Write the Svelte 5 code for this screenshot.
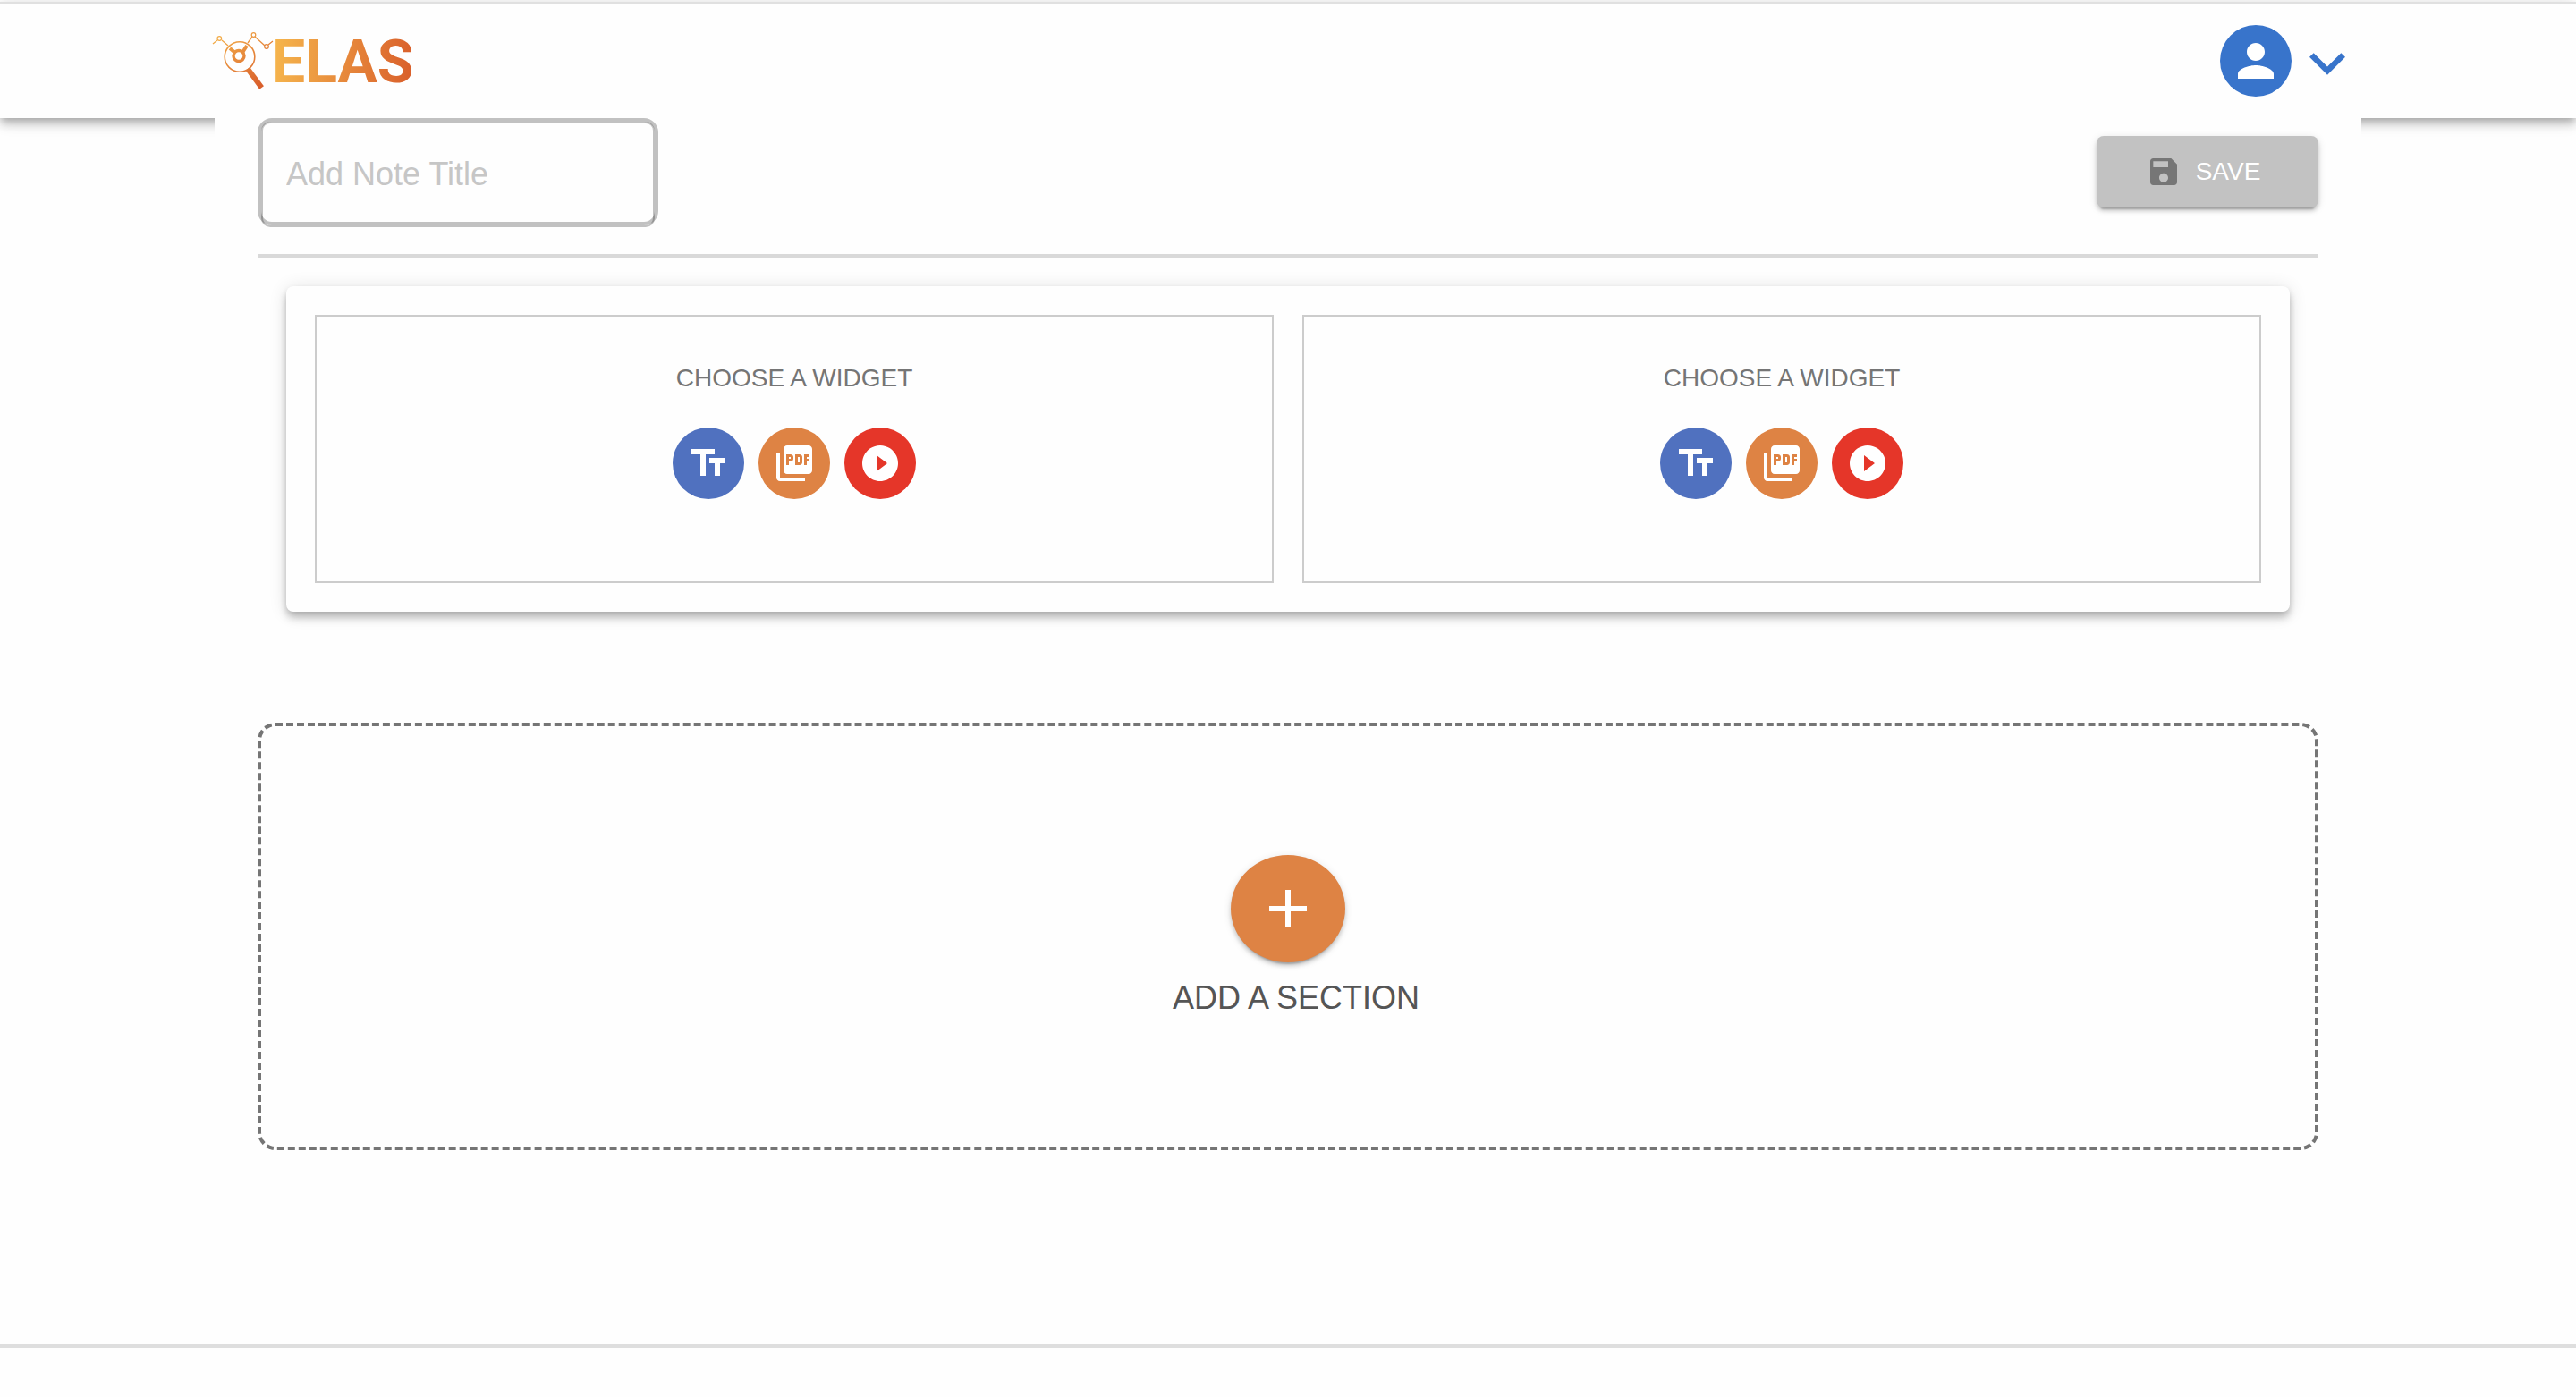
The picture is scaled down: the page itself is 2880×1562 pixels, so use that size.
<script>
  const panels = [0, 1];
</script>

<header>
  <div class="wrap bar">
    <a class="logo" href="#home" aria-label="ELAS home">
      <svg width="240" height="100" viewBox="236 18 240 100">
        <defs>
          <linearGradient id="word" gradientUnits="userSpaceOnUse" x1="308" y1="60" x2="462" y2="76">
            <stop offset="0" stop-color="#f5b44c" />
            <stop offset="1" stop-color="#d95f2b" />
          </linearGradient>
          <linearGradient id="glass" gradientUnits="userSpaceOnUse" x1="250" y1="40" x2="288" y2="98">
            <stop offset="0" stop-color="#f2ac49" />
            <stop offset="1" stop-color="#d95f2b" />
          </linearGradient>
        </defs>
        <g fill="none" stroke="url(#glass)">
          <path stroke-width="1.300" d="M238 49l5-4M248 45l7 6M277 48l5-7M285 41l11 10M300 50l5-4" />
          <circle cx="245.300" cy="43" r="2.300" stroke-width="1.200" />
          <circle cx="283.500" cy="39" r="2.300" stroke-width="1.200" />
          <circle cx="298" cy="52" r="2.300" stroke-width="1.200" />
          <circle cx="268" cy="63.500" r="16.800" stroke-width="1.600" />
          <circle cx="267" cy="62.500" r="6" stroke-width="3.400" />
          <path stroke-width="4" d="M257 54l6 5M276 51l-4.500 7" />
          <path stroke-width="6" d="M277 77l15.500 21" />
        </g>
        <text class="word" x="304" y="92" fill="url(#word)">ELAS</text>
      </svg>
    </a>
    <button class="account" aria-label="Account menu">
      <span class="avatar">
        <svg width="60" height="60" viewBox="0 0 24 24"><path d="M12 12c2.210 0 4-1.790 4-4s-1.790-4-4-4-4 1.790-4 4 1.790 4 4 4zm0 2c-2.670 0-8 1.340-8 4v2h16v-2c0-2.660-5.330-4-8-4z" /></svg>
      </span>
      <svg class="chevron" width="40" height="25" viewBox="6 8.590 12 7.410"><path d="M16.590 8.590L12 13.170 7.410 8.590 6 10l6 6 6-6z" /></svg>
    </button>
  </div>
</header>

<main class="wrap">
  <div class="toolbar">
    <div class="field"><input type="text" placeholder="Add Note Title" aria-label="Note title" /></div>
    <button class="save">
      <svg width="40" height="40" viewBox="0 0 24 24"><path d="M17 3H5c-1.110 0-2 .9-2 2v14c0 1.100.89 2 2 2h14c1.100 0 2-.9 2-2V7l-4-4zm-5 16c-1.660 0-3-1.340-3-3s1.340-3 3-3 3 1.340 3 3-1.340 3-3 3zm3-10H5V5h10v4z" /></svg>
      SAVE
    </button>
  </div>

  <section class="card">
    {#each panels as panel (panel)}
      <div class="panel">
        <p>CHOOSE A WIDGET</p>
        <div class="widgets">
          <button class="text" aria-label="Text widget">
            <svg viewBox="0 0 24 24"><path d="M2.500 4v3h5v12h3V7h5V4h-13zm19 5h-9v3h3v7h3v-7h3V9z" /></svg>
          </button>
          <button class="pdf" aria-label="PDF widget">
            <svg viewBox="0 0 24 24"><path d="M20 2H8c-1.100 0-2 .9-2 2v12c0 1.100.9 2 2 2h12c1.100 0 2-.9 2-2V4c0-1.100-.9-2-2-2zm-8.500 7.500c0 .83-.67 1.500-1.500 1.500H9v2H7.500V7H10c.83 0 1.500.67 1.500 1.500v1zm5 2c0 .83-.67 1.500-1.500 1.500h-2.500V7H15c.83 0 1.500.67 1.500 1.500v3zm4-3H19v1h1.500V11H19v2h-1.500V7h3v1.500zM9 9.500h1v-1H9v1zM4 6H2v14c0 1.100.9 2 2 2h14v-2H4V6zm10 5.500h1v-3h-1v3z" /></svg>
          </button>
          <button class="video" aria-label="Video widget">
            <svg viewBox="0 0 24 24"><path d="M12 2C6.480 2 2 6.480 2 12s4.480 10 10 10 10-4.480 10-10S17.520 2 12 2zm-2 14.500v-9l6 4.500-6 4.500z" /></svg>
          </button>
        </div>
      </div>
    {/each}
  </section>

  <section class="add">
    <button id="add-section" aria-label="Add a section">
      <svg width="72" height="72" viewBox="0 0 24 24"><path d="M19 13h-6v6h-2v-6H5v-2h6V5h2v6h6v2z" /></svg>
    </button>
    <label for="add-section">ADD A SECTION</label>
  </section>
</main>

<footer></footer>

<style>
  :global(body) {
    background: #fefefe;
    font-family: "Liberation Sans", Arial, sans-serif;
  }
  :global(*) {
    box-sizing: border-box;
  }
  button {
    border: 0;
    padding: 0;
    background: none;
    font: inherit;
    cursor: pointer;
  }
  svg {
    display: block;
    fill: currentColor;
  }
  .wrap {
    width: calc(100% - 480px);
    max-width: 2400px;
    margin: 0 auto;
  }
  header {
    margin-top: 2px;
    border-top: 2px solid #e0e0e0;
    background: #fefefe;
    box-shadow:
      0 4px 8px -2px rgba(0, 0, 0, 0.2),
      0 8px 10px rgba(0, 0, 0, 0.14),
      0 2px 20px rgba(0, 0, 0, 0.12);
  }
  .bar {
    display: flex;
    align-items: center;
    justify-content: space-between;
    height: 128px;
    padding-right: 18px;
  }
  .logo {
    margin-left: -4px;
  }
  .word {
    font: 700 66px Roboto, sans-serif;
  }
  .account {
    display: flex;
    align-items: center;
    gap: 20px;
    color: #3874cb;
  }
  .avatar {
    display: grid;
    place-items: center;
    width: 80px;
    height: 80px;
    border-radius: 50%;
    background: #3874cb;
    color: #fff;
  }
  .chevron {
    margin-top: 6px;
  }
  main {
    position: relative;
    padding: 0 48px;
    background: #fefefe;
  }
  .toolbar {
    display: flex;
    justify-content: space-between;
    align-items: flex-start;
    height: 156px;
    border-bottom: 4px solid #d9d9d9;
  }
  .field {
    width: 448px;
    height: 120px;
    border: 4px solid rgba(0, 0, 0, 0.24);
    border-radius: 16px;
  }
  input {
    display: block;
    width: 100%;
    height: 118px;
    padding: 0 26px;
    border: 2px solid rgba(0, 0, 0, 0.24);
    border-radius: 10px;
    outline: 0;
    background: none;
    font: 36px "Liberation Sans", Arial, sans-serif;
    color: #333;
  }
  input::placeholder {
    color: #c6c6c6;
    opacity: 1;
  }
  .save {
    display: flex;
    align-items: center;
    justify-content: center;
    gap: 16px;
    width: 248px;
    height: 80px;
    margin-top: 20px;
    padding-right: 10px;
    border-radius: 8px;
    background: #c2c2c2;
    color: #fff;
    font-size: 28px;
    box-shadow:
      0 6px 2px -4px rgba(0, 0, 0, 0.2),
      0 4px 4px rgba(0, 0, 0, 0.14),
      0 2px 10px rgba(0, 0, 0, 0.12);
  }
  .save svg {
    color: #767676;
  }
  .card {
    display: grid;
    grid-template-columns: 1fr 1fr;
    gap: 32px;
    margin: 32px;
    padding: 32px;
    border-radius: 8px;
    background: #fefefe;
    box-shadow:
      0 4px 8px -2px rgba(0, 0, 0, 0.2),
      0 8px 10px rgba(0, 0, 0, 0.14),
      0 2px 20px rgba(0, 0, 0, 0.12);
  }
  .panel {
    display: flex;
    flex-direction: column;
    align-items: center;
    height: 300px;
    padding-top: 52px;
    border: 2px solid #ccc;
  }
  p {
    margin: 0 0 38px;
    font-size: 28px;
    line-height: 34px;
    color: #757575;
  }
  .widgets {
    display: flex;
    gap: 16px;
  }
  .widgets button {
    display: grid;
    place-items: center;
    width: 80px;
    height: 80px;
    border-radius: 50%;
    color: #fff;
  }
  .widgets svg {
    width: 48px;
    height: 48px;
  }
  .widgets .text {
    background: #5071bf;
  }
  .widgets .pdf {
    background: #de8344;
  }
  .widgets .video {
    background: #e53629;
  }
  .add {
    display: flex;
    flex-direction: column;
    align-items: center;
    height: 478px;
    margin-top: 124px;
    padding-top: 144px;
    border: 4px dashed #757575;
    border-radius: 20px;
  }
  .add button {
    display: grid;
    place-items: center;
    width: 128px;
    height: 120px;
    border-radius: 50%;
    background: #de8344;
    color: #fff;
    box-shadow:
      0 6px 2px -4px rgba(0, 0, 0, 0.2),
      0 4px 4px rgba(0, 0, 0, 0.14),
      0 2px 10px rgba(0, 0, 0, 0.12);
  }
  label {
    padding-left: 18px;
    margin-top: 20px;
    font-size: 36px;
    line-height: 40px;
    color: #555;
  }
  footer {
    margin-top: 217px;
    border-top: 4px solid #dedede;
  }
</style>
